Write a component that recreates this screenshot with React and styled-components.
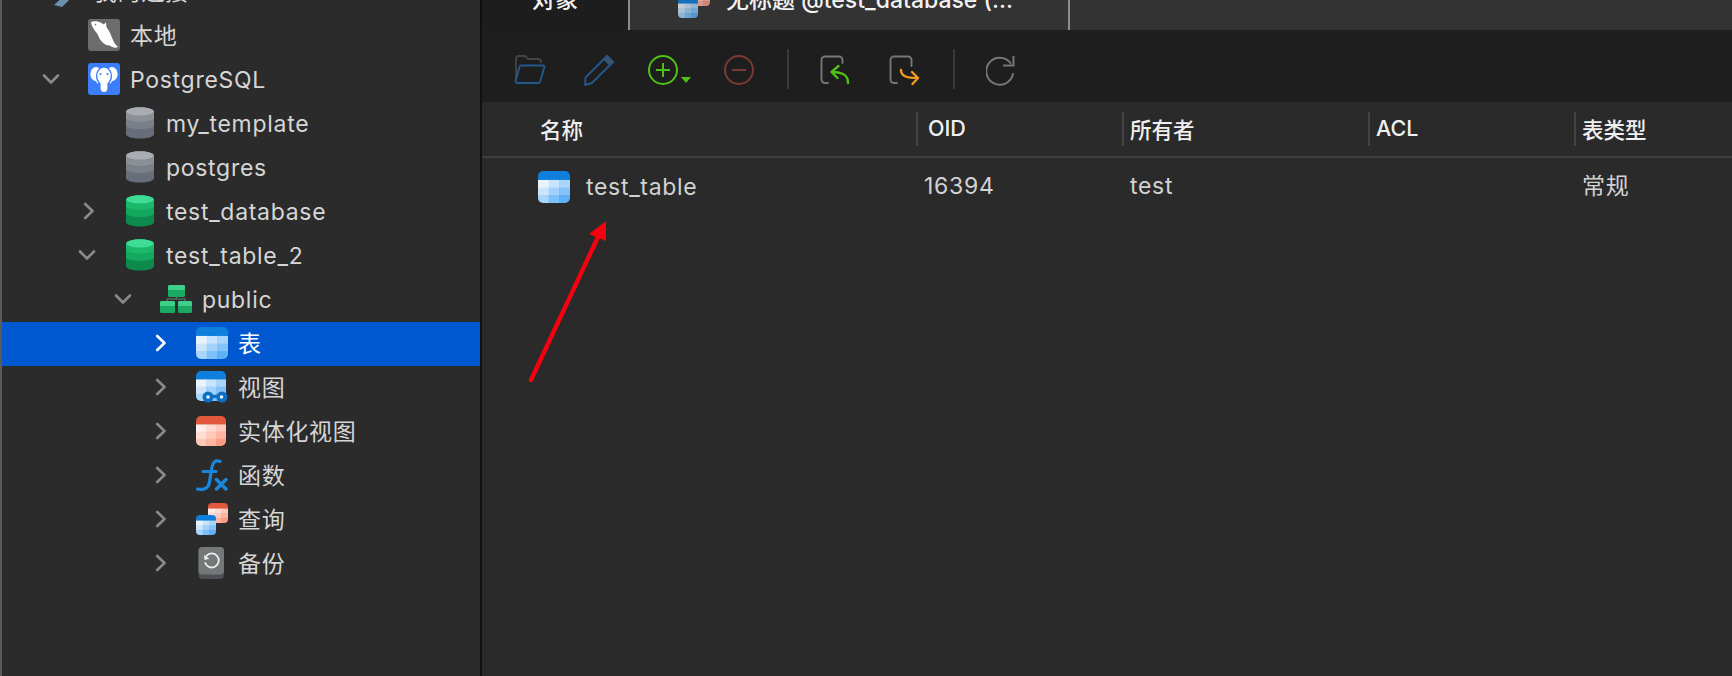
import React from "react";
import styled, { createGlobalStyle } from "styled-components";

const GlobalStyle = createGlobalStyle`
  html, body {
    margin: 0;
    padding: 0;
    height: 100%;
    background: #2a2a2b;
    overflow: hidden;
  }
  body {
    font-family: Inter, "Noto Sans CJK SC", sans-serif;
  }
`;

const Page = styled.div`
  display: flex;
  width: 1732px;
  height: 676px;
  overflow: hidden;
`;

// left connection tree
const Sidebar = styled.aside`
  box-sizing: border-box;
  width: 482px;
  height: 676px;
  flex: none;
  overflow: hidden;
  background: #2b2b2b;
  border-left: 2px solid #5a5a5a;
  border-right: 2px solid #101010;
`;

const Tree = styled.div`
  display: flex;
  flex-direction: column;
  margin-top: -31px;
`;

const Row = styled.div`
  box-sizing: border-box;
  display: flex;
  align-items: center;
  height: 44px;
  padding-left: ${(p) => 1 + p.$level * 36}px;
  background: ${(p) => (p.$selected ? "#0058d0" : "transparent")};
  color: ${(p) => (p.$selected ? "#ffffff" : "#d6d6d6")};
  ${(p) => p.$selected && "margin: 1px 0 -1px; padding-bottom: 2px;"}
`;

const ChevronSlot = styled.span`
  display: flex;
  align-items: center;
  justify-content: center;
  flex: none;
  width: 24px;
  height: 24px;
  margin-right: 25px;
`;

const IconBox = styled.span`
  display: flex;
  align-items: center;
  justify-content: center;
  flex: none;
  width: 32px;
  height: 32px;
`;

const RowLabel = styled.span`
  margin-left: 10px;
  padding-top: 2px;
  font-size: 23px;
  line-height: 30px;
  letter-spacing: 0.7px;
  white-space: nowrap;
`;

// right side
const Main = styled.main`
  position: relative;
  flex: 1;
  min-width: 0;
  display: flex;
  flex-direction: column;
  background: #2a2a2b;
`;

const TabBar = styled.div`
  display: flex;
  height: 30px;
  flex: none;
  background: #333333;
`;

const Tab = styled.div`
  box-sizing: border-box;
  display: flex;
  align-items: flex-start;
  height: 30px;
  width: ${(p) => p.$width}px;
  flex: none;
  overflow: hidden;
  padding-left: ${(p) => p.$pad}px;
  background: ${(p) => (p.$active ? "#1d1d1d" : "#333333")};
  border-right: 2px solid #8c8c8c;
`;

const TabLabel = styled.span`
  margin-top: -15px;
  margin-left: ${(p) => p.$gap || 0}px;
  font-size: 23px;
  line-height: 30px;
  font-weight: 500;
  color: #f2f2f2;
  white-space: nowrap;
`;

const TabIcon = styled.span`
  display: block;
  flex: none;
  width: 34px;
  height: 30px;
  margin-top: -14px;
  opacity: 0.8;
`;

const Toolbar = styled.div`
  box-sizing: border-box;
  display: flex;
  align-items: center;
  gap: 32px;
  height: 72px;
  flex: none;
  padding: 6px 0 0 32px;
  background: #1e1e1e;
`;

const ToolButton = styled.span`
  display: flex;
  align-items: center;
  flex: none;
  width: ${(p) => p.$width}px;
  height: 32px;
  margin-top: 2px;
`;

const ToolDivider = styled.span`
  flex: none;
  width: 2px;
  height: 40px;
  margin-right: -1px;
  background: #3a3a3a;
`;

const Grid = styled.div`
  display: grid;
  grid-template-columns: 435px 206px 246px 206px 1fr;
`;

const HeaderGrid = styled(Grid)`
  height: 54px;
  border-bottom: 2px solid #3d3d3d;
  background: #2a2a2a;
`;

const HeaderCell = styled.div`
  display: flex;
  align-items: center;
`;

const HeaderLabel = styled.span`
  display: flex;
  align-items: center;
  height: 32px;
  padding-left: ${(p) => p.$pad}px;
  padding-bottom: 2px;
  border-left: ${(p) => (p.$first ? "none" : "2px solid #444444")};
  font-size: 21.5px;
  font-weight: 500;
  color: #f0f0f0;
  transform: translateX(-1px);
`;

const DataGrid = styled(Grid)`
  height: 58px;
`;

const DataCell = styled.div`
  display: flex;
  align-items: center;
  padding-left: ${(p) => p.$pad}px;
  margin-top: ${(p) => p.$up || 0}px;
  font-size: 23px;
  letter-spacing: 0.7px;
  color: #d2d2d2;
`;

const TableName = styled.span`
  margin-left: 16px;
`;

const Arrow = styled.svg`
  position: absolute;
  left: 40px;
  top: 215px;
`;

const ClosedChevron = styled.svg`
  margin-left: 4px;
`;

const Chevron = ({ open, color = "#8a8a8a" }) =>
  open ? (
    <svg width="18" height="12" viewBox="0 0 18 12" fill="none">
      <path d="M2 2.5 L9 9.5 L16 2.5" stroke={color} strokeWidth="2.6" strokeLinecap="round" strokeLinejoin="round" />
    </svg>
  ) : (
    <ClosedChevron width="12" height="18" viewBox="0 0 12 18" fill="none">
      <path d="M2.2 2 L9.5 9 L2.2 16" stroke={color} strokeWidth="2.6" strokeLinecap="round" strokeLinejoin="round" />
    </ClosedChevron>
  );

const BLUE = {
  head: "#0f7fdc",
  cells: ["#e9f3fe", "#c8e3fd", "#a9d4fc", "#cbe5fd", "#a2d2fc", "#84c3fa", "#a8d6fd", "#7cc1fa", "#5fb1f7"],
};
const RED = {
  head: "#e2583a",
  cells: ["#ffeee9", "#ffdcd2", "#ffc9ba", "#ffdcd2", "#ffc9ba", "#ffb5a2", "#ffc9ba", "#ffb5a2", "#fb9c86"],
};

// little grid drawing shared by table, view and query icons
const TableShape = ({ x = 0, y = 0, w = 32, h = 32, pal = BLUE, id }) => {
  const head = h * 0.28;
  const cw = w / 3;
  const ch = (h - head) / 3;
  return (
    <g>
      <clipPath id={id}>
        <rect x={x} y={y} width={w} height={h} rx={w > 24 ? 5 : 4} />
      </clipPath>
      <g clipPath={`url(#${id})`}>
        <rect x={x} y={y} width={w} height={head + 0.5} fill={pal.head} />
        {pal.cells.map((c, i) => (
          <rect
            key={i}
            x={x + (i % 3) * cw}
            y={y + head + Math.floor(i / 3) * ch}
            width={cw + 0.5}
            height={ch + 0.5}
            fill={c}
          />
        ))}
      </g>
    </g>
  );
};

const TableIcon = ({ id, w = 32, h = 32, pal = BLUE }) => (
  <svg width="32" height="32" viewBox="0 0 32 32">
    <TableShape id={id} x={(32 - w) / 2 - (w < 32 ? 1 : 0)} y={(32 - h) / 2} w={w} h={h} pal={pal} />
  </svg>
);

const ViewIcon = () => (
  <svg width="32" height="32" viewBox="0 0 32 32">
    <TableShape id="view-t" x={0} y={0} w={30} h={30} />
    <rect x="10" y="24" width="14" height="3" fill="#0f6fc4" />
    <circle cx="12" cy="26" r="5.5" fill="#0f6fc4" />
    <circle cx="26" cy="26" r="5.5" fill="#0f6fc4" />
    <circle cx="12" cy="26" r="1.8" fill="#e8f3fe" />
    <circle cx="25.5" cy="26" r="1.8" fill="#e8f3fe" />
  </svg>
);

const FuncIcon = () => (
  <svg width="32" height="32" viewBox="0 0 32 32" fill="none">
    <path d="M24 2.4 C19.5 0.6 17 3 16 8 L13.5 23 C12.7 28.5 9 31.5 1.5 30" stroke="#1b87dc" strokeWidth="3.2" strokeLinecap="round" />
    <path d="M7 12.5 H20" stroke="#1b87dc" strokeWidth="3" strokeLinecap="round" />
    <path d="M20.5 20.5 L30 30 M30 20.5 L20.5 30" stroke="#1b87dc" strokeWidth="3.4" strokeLinecap="round" />
  </svg>
);

const QueryIcon = ({ prefix = "query" }) => (
  <svg width="32" height="32" viewBox="0 0 32 32">
    <TableShape id={`${prefix}-r`} x={12} y={0} w={20} h={20} pal={RED} />
    <TableShape id={`${prefix}-b`} x={0} y={12} w={20} h={20} />
  </svg>
);

const BackupIcon = () => (
  <svg width="32" height="32" viewBox="0 0 32 32" fill="none">
    <rect x="2.5" y="0" width="25.5" height="32" rx="4" fill="#4c5054" />
    <rect x="2.5" y="0" width="25.5" height="27.5" rx="4" fill="#747879" />
    <path d="M10.5 8.8 A7 7 0 1 1 9.2 16" stroke="#f0f0f0" strokeWidth="1.8" strokeLinecap="round" />
    <path d="M8 8 L8.5 13 L13.4 11.8 Z" fill="#f0f0f0" />
  </svg>
);

const Cylinder = ({ top, a, b, c }) => (
  <svg width="28" height="32" viewBox="0 0 28 32">
    <path d="M0 5 C0 -1 28 -1 28 5 V27 C28 33 0 33 0 27 Z" fill={c} />
    <path d="M0 5 C0 -1 28 -1 28 5 V18 C28 23.5 0 23.5 0 18 Z" fill={b} />
    <path d="M0 5 C0 -1 28 -1 28 5 V11 C28 16 0 16 0 11 Z" fill={a} />
    <ellipse cx="14" cy="4.4" rx="13.6" ry="4.2" fill={top} />
  </svg>
);

const GrayDb = () => <Cylinder top="#a9adb2" a="#8b9097" b="#7a8088" c="#686e79" />;
const GreenDb = () => <Cylinder top="#3fdc96" a="#1ab868" b="#12a85d" c="#0b8a4b" />;

const SchemaIcon = () => (
  <svg width="32" height="32" viewBox="0 0 32 32">
    <path d="M16.5 14 V16 M7 18 V16 H25 V18" stroke="#4c6a5a" strokeWidth="1.6" fill="none" />
    <rect x="8" y="2" width="17" height="12" rx="1.5" fill="#1aa862" />
    <rect x="8" y="2" width="17" height="5" rx="1.5" fill="#3ecf88" />
    <rect x="0" y="18" width="15" height="12" rx="1.5" fill="#1aa862" />
    <rect x="0" y="18" width="15" height="5" rx="1.5" fill="#3ecf88" />
    <rect x="18" y="18" width="14" height="12" rx="1.5" fill="#1aa862" />
    <rect x="18" y="18" width="14" height="5" rx="1.5" fill="#3ecf88" />
  </svg>
);

const MysqlIcon = () => (
  <svg width="32" height="32" viewBox="0 0 32 32">
    <rect width="32" height="32" rx="3" fill="#6c6c6c" />
    <path
      d="M3 3 C9 1 15 4 19 9 C22 12.5 23 17 25 21 C26 24 28 26 30 28 C27 29.5 24 28.5 22 26.5 C17 27 12 22 10.5 17 C9 13 4 10 3 3 Z"
      fill="#ffffff"
    />
    <path d="M15 6 L18 3.5 L18.5 9 Z" fill="#ffffff" />
    <circle cx="7.5" cy="5.6" r="0.8" fill="#6c6c6c" />
  </svg>
);

const PgIcon = () => (
  <svg width="32" height="32" viewBox="0 0 32 32">
    <rect width="32" height="32" rx="3" fill="#3b7dfb" />
    <ellipse cx="8" cy="11" rx="5.6" ry="7" fill="#fff" />
    <ellipse cx="24" cy="11" rx="5.6" ry="7" fill="#fff" />
    <path d="M6 16 L10 21 L12 15 Z M26 16 L22 21 L20 15 Z" fill="#fff" />
    <ellipse cx="16" cy="13" rx="7.4" ry="9" fill="#fff" stroke="#3b7dfb" strokeWidth="1.4" />
    <rect x="12.6" y="16" width="6.8" height="13" rx="3.4" fill="#fff" />
    <circle cx="12.5" cy="11" r="1" fill="#3b7dfb" />
    <circle cx="19.5" cy="11" r="1" fill="#3b7dfb" />
  </svg>
);

const ConnIcon = () => (
  <svg width="32" height="32" viewBox="0 0 32 32">
    <path d="M2 30 L14 19 L19 23 L10 32 Z M14 19 C16 15 24 16 22 24 Z" fill="#6b8fae" />
  </svg>
);

const FolderTool = () => (
  <svg width="32" height="30" viewBox="0 0 32 30" fill="none">
    <path d="M2 22 V4 A3 3 0 0 1 5 1 H11 L14 4 H24 A3 3 0 0 1 27 7 V8" stroke="#444444" strokeWidth="1.8" />
    <path d="M7 10.5 H29 A1.4 1.4 0 0 1 30.3 12.4 L26 27 A1.6 1.6 0 0 1 24.5 28 H3.5 A2 2 0 0 1 1.6 26 L5.6 11.6 A1.5 1.5 0 0 1 7 10.5 Z" stroke="#24578a" strokeWidth="1.9" />
  </svg>
);

const PencilTool = () => (
  <svg width="32" height="32" viewBox="0 0 32 32" fill="none">
    <path d="M24 2 L30 8 L9 29 L2 31 L2.5 23.5 Z" stroke="#24578a" strokeWidth="1.9" strokeLinejoin="round" />
    <path d="M21 5 L27 11 L30 8 L24 2 Z" fill="#4d4f52" stroke="#24578a" strokeWidth="1.6" />
  </svg>
);

const PlusTool = () => (
  <svg width="44" height="32" viewBox="0 0 44 32" fill="none">
    <circle cx="15" cy="16" r="14" stroke="#4fc016" strokeWidth="2" />
    <path d="M15 9 V23 M8 16 H22" stroke="#4fc016" strokeWidth="2" />
    <path d="M33 23 H43 L38 29 Z" fill="#4fc016" />
  </svg>
);

const MinusTool = () => (
  <svg width="31" height="32" viewBox="0 0 31 32" fill="none">
    <circle cx="15" cy="16" r="14" stroke="#7a3a35" strokeWidth="2" />
    <path d="M8 16 H22" stroke="#7a3a35" strokeWidth="2" />
  </svg>
);

const UndoTool = () => (
  <svg width="30" height="32" viewBox="0 0 30 32" fill="none">
    <path d="M8 29 H5 A3.5 3.5 0 0 1 1.5 25.5 V6 A3.5 3.5 0 0 1 5 2.5 H19 A3.5 3.5 0 0 1 22.5 6 V9" stroke="#767676" strokeWidth="1.9" strokeLinecap="round" />
    <path d="M28 29 C28 22 24 18 12 18 M18.5 12 L11.5 18 L17.5 24" stroke="#4fc016" strokeWidth="2.4" strokeLinecap="round" strokeLinejoin="round" />
  </svg>
);

const RedoTool = () => (
  <svg width="32" height="32" viewBox="0 0 32 32" fill="none">
    <path d="M8 29 H5 A3.5 3.5 0 0 1 1.5 25.5 V6 A3.5 3.5 0 0 1 5 2.5 H19 A3.5 3.5 0 0 1 22.5 6 V12" stroke="#767676" strokeWidth="1.9" strokeLinecap="round" />
    <path d="M12 16 C12 22 17 24 29 24 M23 18 L29 24 L23.5 30" stroke="#f09a1e" strokeWidth="2.4" strokeLinecap="round" strokeLinejoin="round" />
  </svg>
);

const RefreshTool = () => (
  <svg width="30" height="32" viewBox="0 0 30 32" fill="none">
    <path d="M24.5 9 A13.5 13.5 0 1 0 27 20" stroke="#767676" strokeWidth="2" strokeLinecap="round" />
    <path d="M27.5 2 V11.5 H17" stroke="#767676" strokeWidth="2" />
  </svg>
);

const treeRows = [
  { level: 0, label: "我的连接", icon: <ConnIcon /> },
  { level: 1, label: "本地", icon: <MysqlIcon /> },
  { level: 1, label: "PostgreSQL", icon: <PgIcon />, chevron: "open" },
  { level: 2, label: "my_template", icon: <GrayDb /> },
  { level: 2, label: "postgres", icon: <GrayDb /> },
  { level: 2, label: "test_database", icon: <GreenDb />, chevron: "closed" },
  { level: 2, label: "test_table_2", icon: <GreenDb />, chevron: "open" },
  { level: 3, label: "public", icon: <SchemaIcon />, chevron: "open" },
  { level: 4, label: "表", icon: <TableIcon id="tree-table" />, chevron: "closed", selected: true },
  { level: 4, label: "视图", icon: <ViewIcon />, chevron: "closed" },
  { level: 4, label: "实体化视图", icon: <TableIcon id="tree-mat" w={30} h={30} pal={RED} />, chevron: "closed" },
  { level: 4, label: "函数", icon: <FuncIcon />, chevron: "closed" },
  { level: 4, label: "查询", icon: <QueryIcon />, chevron: "closed" },
  { level: 4, label: "备份", icon: <BackupIcon />, chevron: "closed" },
];

const columns = [
  { label: "名称", pad: 59, first: true },
  { label: "OID", pad: 10 },
  { label: "所有者", pad: 6 },
  { label: "ACL", pad: 6 },
  { label: "表类型", pad: 6 },
];

export default function App() {
  return (
    <Page>
      <GlobalStyle />
      <Sidebar>
        <Tree>
          {treeRows.map((row) => (
            <Row key={row.label} $level={row.level} $selected={row.selected}>
              <ChevronSlot>
                {row.chevron && (
                  <Chevron open={row.chevron === "open"} color={row.selected ? "#ffffff" : "#8a8a8a"} />
                )}
              </ChevronSlot>
              <IconBox>{row.icon}</IconBox>
              <RowLabel>{row.label}</RowLabel>
            </Row>
          ))}
        </Tree>
      </Sidebar>
      <Main>
        <TabBar>
          <Tab $active $width={148} $pad={50}>
            <TabLabel>对象</TabLabel>
          </Tab>
          <Tab $width={440} $pad={48}>
            <TabIcon>
              <QueryIcon prefix="tab" />
            </TabIcon>
            <TabLabel $gap={14}>无标题 @test_database (...</TabLabel>
          </Tab>
        </TabBar>
        <Toolbar>
          <ToolButton $width={37}><FolderTool /></ToolButton>
          <ToolButton $width={33}><PencilTool /></ToolButton>
          <ToolButton $width={44}><PlusTool /></ToolButton>
          <ToolButton $width={31}><MinusTool /></ToolButton>
          <ToolDivider />
          <ToolButton $width={37}><UndoTool /></ToolButton>
          <ToolButton $width={32}><RedoTool /></ToolButton>
          <ToolDivider />
          <ToolButton $width={30}><RefreshTool /></ToolButton>
        </Toolbar>
        <HeaderGrid>
          {columns.map((col) => (
            <HeaderCell key={col.label}>
              <HeaderLabel $pad={col.pad} $first={col.first}>{col.label}</HeaderLabel>
            </HeaderCell>
          ))}
        </HeaderGrid>
        <DataGrid>
          <DataCell $pad={56}>
            <TableIcon id="row-table" />
            <TableName>test_table</TableName>
          </DataCell>
          <DataCell $pad={7} $up={-3}>16394</DataCell>
          <DataCell $pad={7} $up={-3}>test</DataCell>
          <DataCell $pad={8} $up={-3} />
          <DataCell $pad={7} $up={-6}>常规</DataCell>
        </DataGrid>
        <Arrow width="90" height="175" viewBox="0 0 90 175" fill="none">
          <path d="M9 165 L76 22" stroke="#f5000f" strokeWidth="4.4" strokeLinecap="round" />
          <path d="M84 6 L84 26 L67 19 Z" fill="#f5000f" />
        </Arrow>
      </Main>
    </Page>
  );
}
